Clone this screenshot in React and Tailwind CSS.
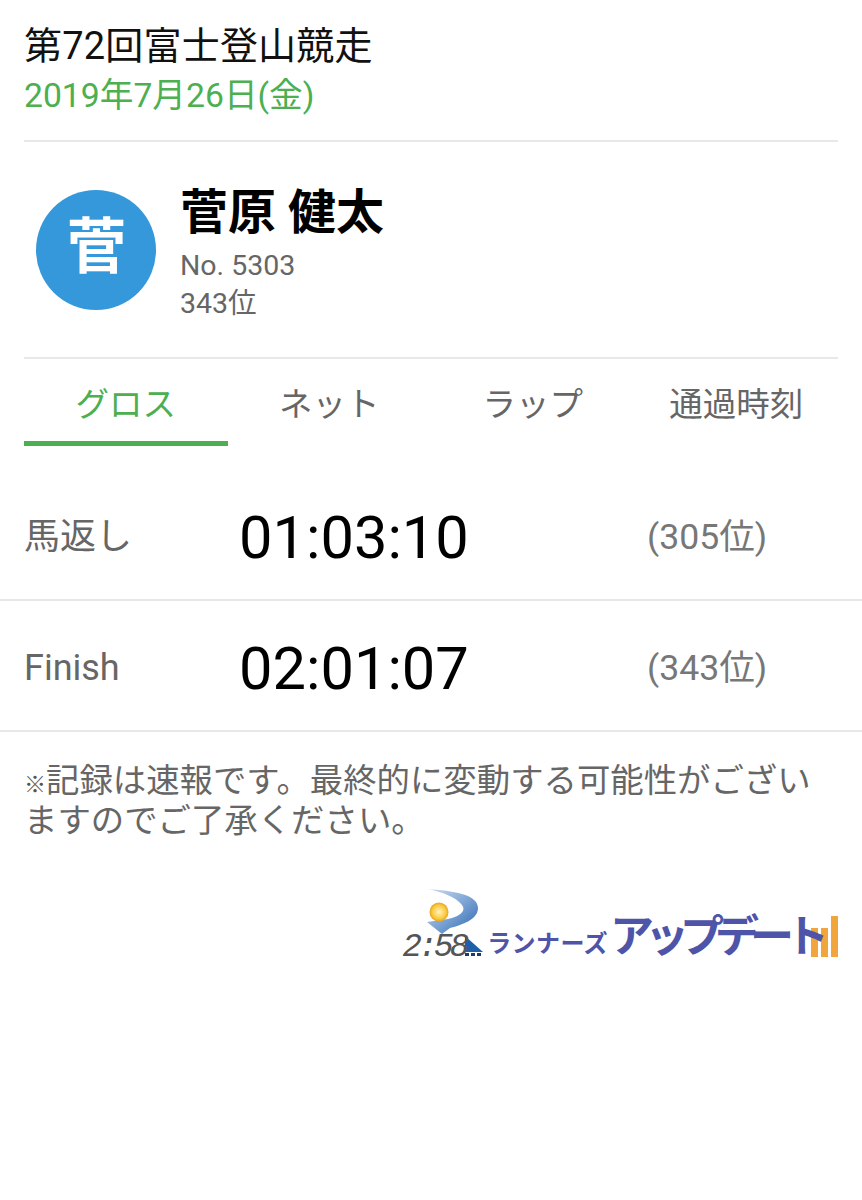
import React from 'react';

const tabs = ['グロス', 'ネット', 'ラップ', '通過時刻'];

const records = [
  { label: '馬返し', time: '01:03:10', rank: '(305位)' },
  { label: 'Finish', time: '02:01:07', rank: '(343位)' },
];

const Logo = () => (
  <div className="flex items-end justify-end h-[72px]">
    <div className="relative w-[80px] h-[72px]">
      <svg className="absolute inset-0" width="80" height="72" viewBox="0 0 80 72">
        <defs>
          <linearGradient id="swoosh" x1="0" y1="0" x2="1" y2="1">
            <stop offset="0" stopColor="#d3deec" />
            <stop offset="0.5" stopColor="#7fa6d6" />
            <stop offset="1" stopColor="#2a66ad" />
          </linearGradient>
          <radialGradient id="sun" cx="0.5" cy="0.5" r="0.5">
            <stop offset="0" stopColor="#fff4c4" />
            <stop offset="0.7" stopColor="#fccb40" />
            <stop offset="1" stopColor="#e5a41f" />
          </radialGradient>
        </defs>
        <path d="M24 1 C48 3 74 6 74 20 C74 30 62 36 46 40 L38 46 L23 34 L44 31 C58 28 62 22 58 17 C52 9 38 4 24 1 Z" fill="url(#swoosh)" />
        <path d="M61 48 L79 64 L61 64 Z" fill="#1d5fa8" />
        <rect x="61" y="65" width="4" height="3" fill="#1a3d6b" />
        <rect x="67" y="65" width="4" height="3" fill="#1a3d6b" />
        <rect x="73" y="65" width="4" height="3" fill="#1a3d6b" />
        <circle cx="35" cy="24" r="9.5" fill="url(#sun)" />
      </svg>
      <span className="absolute left-[-2px] bottom-[-3px] text-[33px] leading-[30px] italic text-[#555] tracking-[-4px] font-['Liberation_Mono',monospace]">
        2:58
      </span>
    </div>
    <span className="ml-[3px] mb-[1px] text-[24px] leading-[30px] font-bold text-[#4e55a8] tracking-[0.4px]">
      ランナーズ
    </span>
    <span className="relative z-10 ml-[2px] mb-[-4px] text-[44px] leading-[54px] font-bold text-[#4e55a8] tracking-[-9px]">
      アップデート
    </span>
    <div className="flex items-end gap-[3px] ml-[-9px] mb-[3px]">
      <div className="w-[7px] h-[29px] bg-[#f0a63c]" />
      <div className="w-[7px] h-[29px] bg-[#f0a63c]" />
      <div className="w-[7px] h-[41px] bg-[#f0a63c]" />
    </div>
  </div>
);

const App = () => {
  return (
    <div className="w-[862px] h-[1200px] bg-white font-['Roboto','Noto_Sans_CJK_JP',sans-serif] overflow-hidden">
      <div className="px-6 pt-[22px]">
        <h1 className="text-[38px] leading-[48px] font-normal text-[#111] tracking-[0.2px]">第72回富士登山競走</h1>
        <p className="mt-[2px] text-[33.7px] leading-[48px] text-[#4caf50]">2019年7月26日(金)</p>
        <div className="h-[2px] bg-[#e8e8e8] mt-[20px]" />

        <div className="flex items-start h-[215px] pl-3 pt-[42px]">
          <div className="w-[120px] h-[120px] mt-[6px] pb-[5px] pl-[1px] rounded-full bg-[#3498db] flex items-center justify-center text-white text-[60px] font-bold">
            菅
          </div>
          <div className="ml-6">
            <div className="text-[48px] leading-[58px] font-bold text-black">菅原 健太</div>
            <div className="mt-[5px] text-[28.5px] leading-[38px] text-[#666]">No. 5303</div>
            <div className="text-[28.5px] leading-[38px] text-[#666]">343位</div>
          </div>
        </div>
        <div className="h-[2px] bg-[#e8e8e8]" />

        <div className="grid grid-cols-4 h-[87px]">
          {tabs.map((tab, i) => (
            <div
              key={tab}
              className={
                i === 0
                  ? 'flex items-center justify-center pt-[10px] text-[33.5px] text-[#4caf50] border-b-[5px] border-[#4caf50]'
                  : 'flex items-center justify-center pt-[10px] text-[33.5px] text-[#666] border-b-[5px] border-transparent'
              }
            >
              {tab}
            </div>
          ))}
        </div>
      </div>

      <div className="mt-[25px]">
        {records.map((r) => (
          <div key={r.label} className="flex items-center h-[131px] pt-[8px] border-b-2 border-[#e8e8e8] px-6 first:h-[130px]">
            <div className="w-[215px] pb-[4px] text-[36px] text-[#666]">{r.label}</div>
            <div className="w-[408px] text-[59.6px] text-black">{r.time}</div>
            <div className="pb-[2px] text-[35.6px] text-[#777]">{r.rank}</div>
          </div>
        ))}
      </div>

      <div className="px-6 pt-[29px] text-[33.4px] leading-[40px] text-[#666]">
        <span className="inline-block w-[22px] text-[22px] leading-none font-bold text-[#555]">※</span>記録は速報です。最終的に変動する可能性がございますのでご了承ください。
      </div>

      <div className="px-6 mt-[47px]">
        <Logo />
      </div>
    </div>
  );
};

export default App;
